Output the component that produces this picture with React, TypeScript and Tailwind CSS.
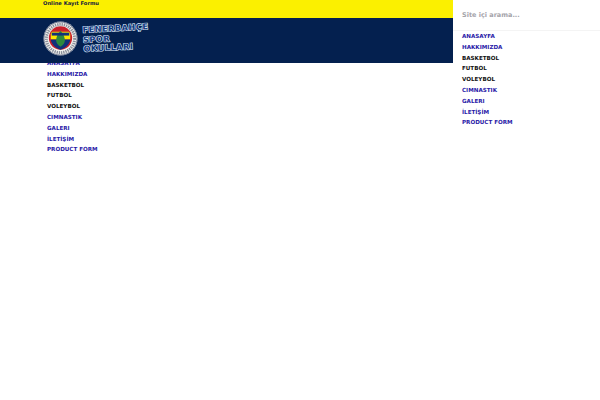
const menu = [
  { label: 'ANASAYFA', color: 'text-[#2a1aa8]' },
  { label: 'HAKKIMIZDA', color: 'text-[#2a1aa8]' },
  { label: 'BASKETBOL', color: 'text-[#111111]' },
  { label: 'FUTBOL', color: 'text-[#111111]' },
  { label: 'VOLEYBOL', color: 'text-[#111111]' },
  { label: 'CIMNASTIK', color: 'text-[#2a1aa8]' },
  { label: 'GALERI', color: 'text-[#2a1aa8]' },
  { label: 'İLETİŞİM', color: 'text-[#2a1aa8]' },
  { label: 'PRODUCT FORM', color: 'text-[#2a1aa8]' },
]

function MenuList({ className }: { className?: string }) {
  return (
    <ul className={className}>
      {menu.map((item) => (
        <li key={item.label} className={`h-[10.8px] text-[5.6px] font-bold leading-[10.8px] ${item.color}`}>
          {item.label}
        </li>
      ))}
    </ul>
  )
}

function Crest() {
  return (
    <svg width="35" height="35" viewBox="0 0 36 36" className="shrink-0">
      <circle cx="18" cy="18" r="17.5" fill="#f4f4f0" />
      <circle cx="18" cy="18" r="17" fill="none" stroke="#1b2a55" strokeWidth="0.6" />
      <circle cx="18" cy="18" r="14.5" fill="none" stroke="#8a8f9c" strokeWidth="3" strokeDasharray="1.4 0.9" />
      <circle cx="18" cy="17.5" r="12" fill="#c8202c" />
      <path d="M9 11h18l1 3v5H8v-5z" fill="#fbe600" />
      <path d="M8 19h20c-.5 5-4.5 8.5-10 10.5C12.500 27.500 8.500 24 8 19z" fill="#12327a" />
      <path d="M18 10c3 3.500 4.500 6.500 4.500 10 0 2.500-2 5-4.500 6.500-2.500-1.500-4.500-4-4.500-6.500 0-3.500 1.500-6.500 4.500-10z" fill="#2f8a3c" />
      <path d="M9 13.500h18" stroke="#12327a" strokeWidth="3" />
    </svg>
  )
}

export default function App() {
  return (
    <div className="relative h-[400px] w-[600px] overflow-hidden bg-white font-['DejaVu_Sans',sans-serif]">
      <header className="relative z-10">
        <div className="h-[18px] bg-[#fbf000] pl-[43px]">
          <span className="block text-[5.2px] font-bold leading-[6px] text-[#14203f]">Online Kayıt Formu</span>
        </div>
        <div className="flex h-[45px] items-center gap-[5px] bg-[#04204f] pb-[5px] pl-[43px]">
          <Crest />
          <div className="-rotate-[3deg] text-[8.2px] font-bold leading-[9.6px] tracking-[0.5px] text-[#123a80] [-webkit-text-stroke:1.2px_#dbe6f5] [paint-order:stroke_fill]">
            <div>FENERBAHÇE</div>
            <div>SPOR</div>
            <div>OKULLARI</div>
          </div>
        </div>
      </header>
      <MenuList className="-mt-[5px] pl-[47px]" />
      <aside className="absolute right-0 top-0 z-20 h-[133px] w-[147px] bg-white">
        <div className="h-[31px] border-b border-[#f4f4f4] pl-[9px] pt-[9px] text-[6.5px] font-bold leading-[12px] text-[#a4a4aa]">
          Site içi arama...
        </div>
        <MenuList className="pl-[9px]" />
      </aside>
    </div>
  )
}
